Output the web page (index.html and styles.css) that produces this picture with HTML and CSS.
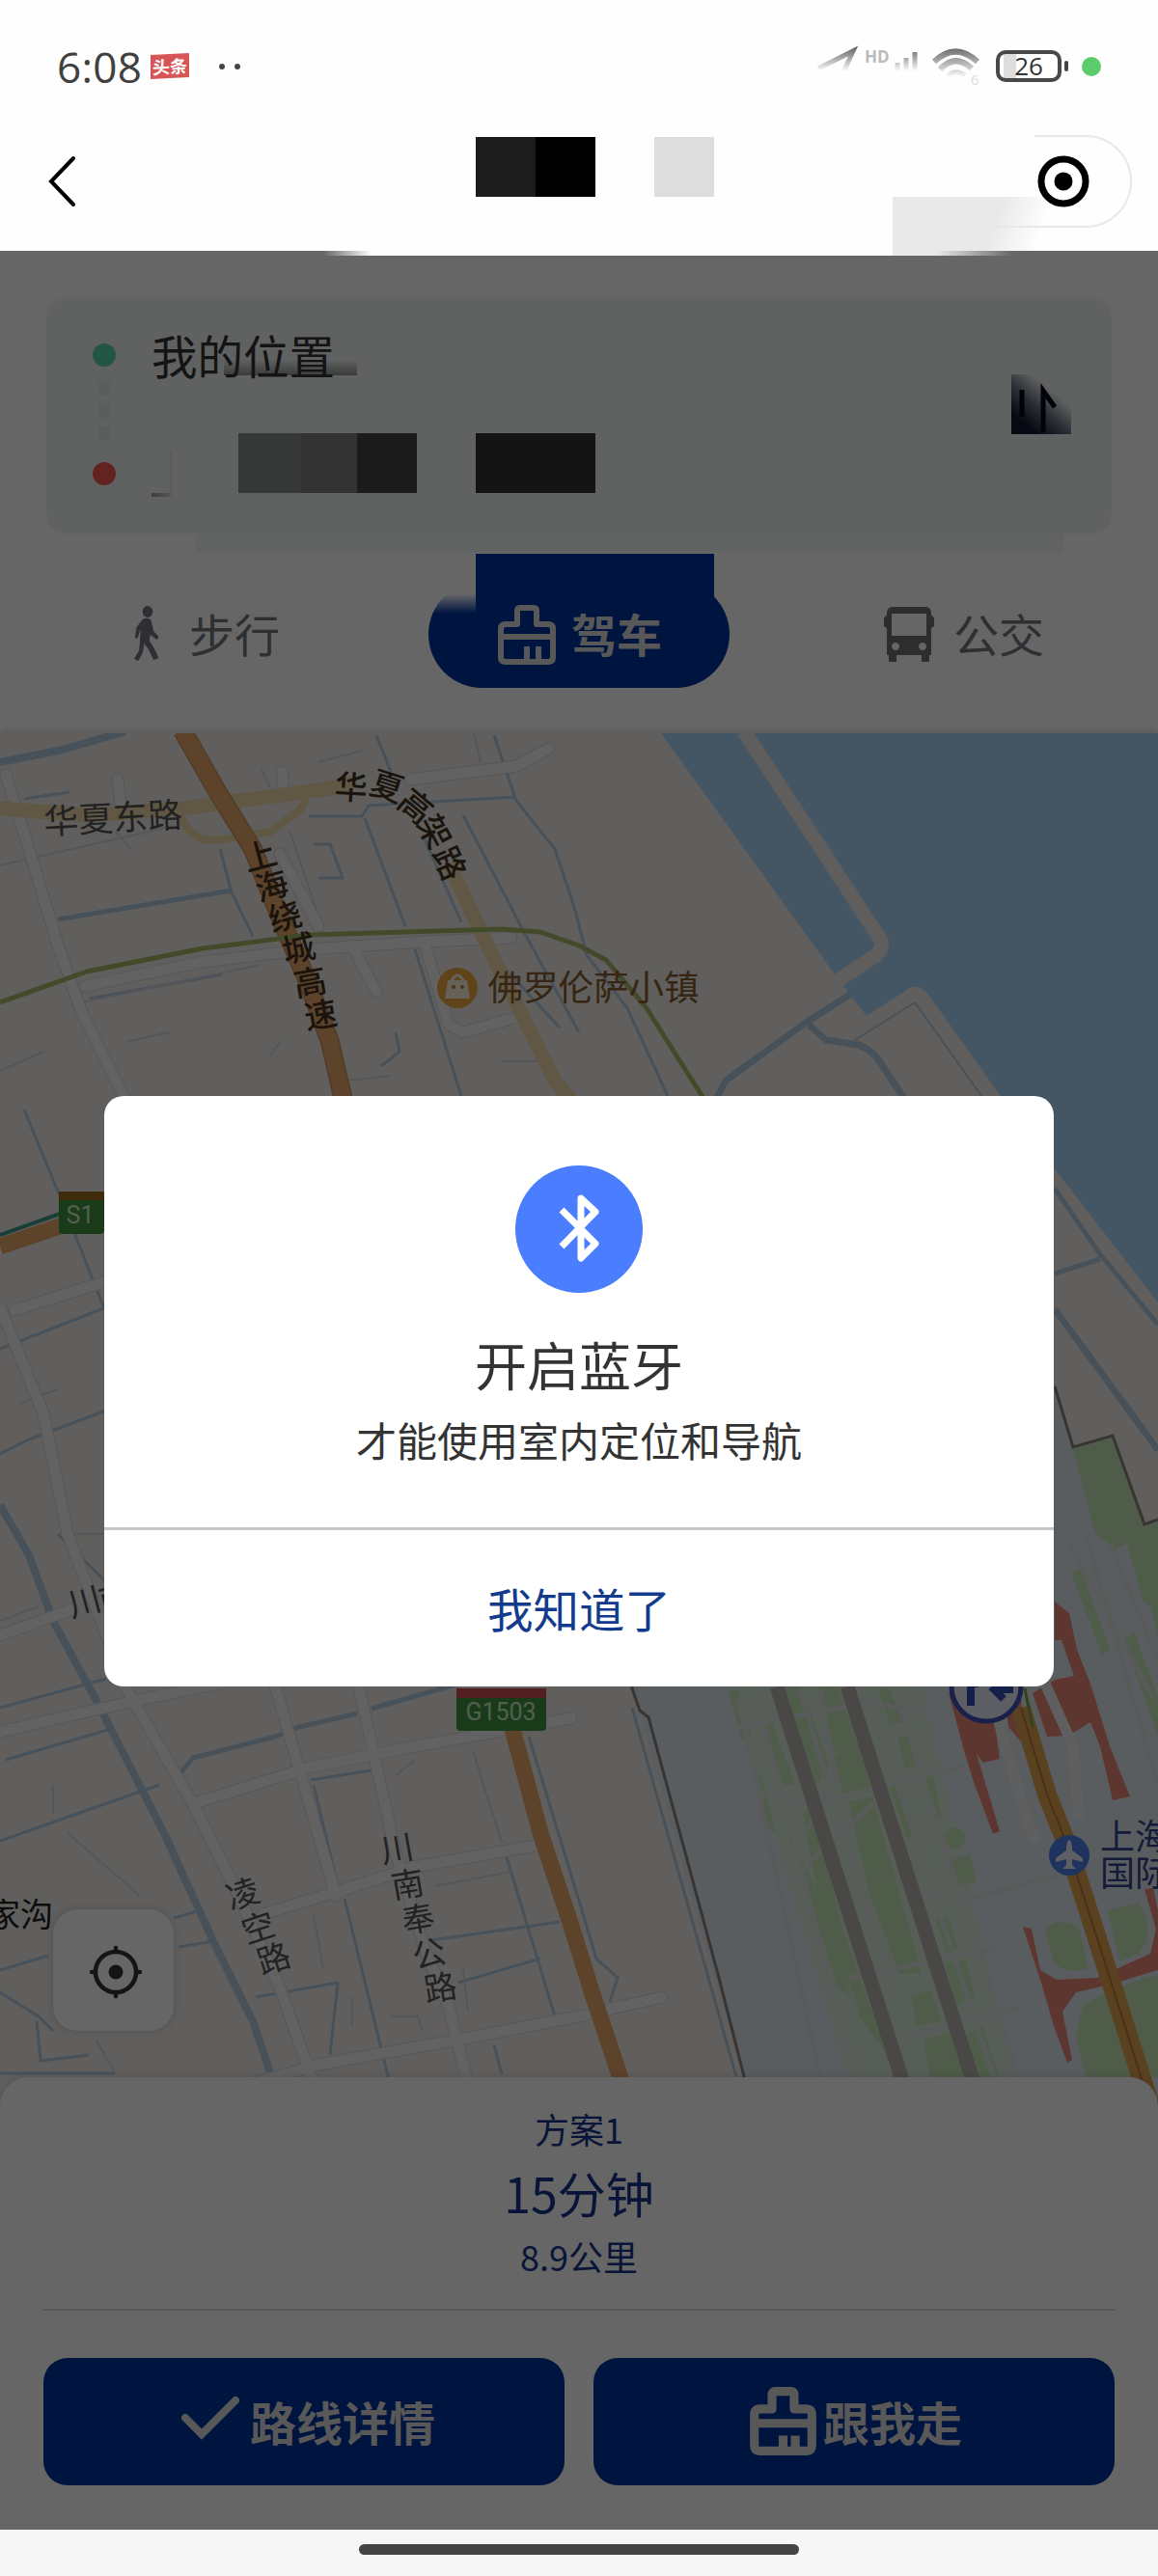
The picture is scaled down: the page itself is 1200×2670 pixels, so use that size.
FILE: index.html
```html
<!DOCTYPE html>
<html lang="zh-CN">
<head>
  <meta charset="UTF-8" />
  <meta name="viewport" content="width=device-width, initial-scale=1.0"/>
  <title>路线导航</title>
  <link rel="stylesheet" href="styles.css">
</head>
<body>
  <header class="header">
    <div class="status">
      <span class="time">6:08</span>
      <span class="news">头条</span>
      <span class="dots"><i></i><i></i></span>
      <svg class="signals" width="180" height="48" viewBox="842 44 180 48" fill="none">
        <defs>
          <linearGradient id="fade" x1="0" y1="46" x2="0" y2="73" gradientUnits="userSpaceOnUse"><stop offset="0" stop-color="#555"/><stop offset="1" stop-color="#fff"/></linearGradient>
          <linearGradient id="fade2" x1="0" y1="48" x2="0" y2="80" gradientUnits="userSpaceOnUse"><stop offset="0" stop-color="#666"/><stop offset="1" stop-color="#fff"/></linearGradient>
        </defs>
        <path d="M848 70 L884 52 L874 74" stroke="url(#fade)" stroke-width="5"/>
        <text x="896" y="64" class="hd">HD</text>
        <path d="M930 73v-9M939 73v-14M948 73v-20" stroke="url(#fade)" stroke-width="5"/>
        <path d="M968 63Q990 42 1013 63" stroke="url(#fade2)" stroke-width="6"/>
        <path d="M974 71Q990 54 1007 70" stroke="url(#fade2)" stroke-width="6"/>
        <path d="M982 78Q990 70 1000 77" stroke="url(#fade2)" stroke-width="5"/>
        <text x="1006" y="87" class="six">6</text>
      </svg>
      <span class="battery"><b>26</b></span>
      <span class="green-dot"></span>
    </div>
    <div class="nav">
      <svg class="back" width="30" height="54" viewBox="0 0 30 54"><path d="M27 3 L4 27 L27 51" fill="none" stroke="#000" stroke-width="4" stroke-linecap="round"/></svg>
      <div class="title-mask"><i class="m1"></i><i class="m2"></i><i class="m3"></i></div>
      <svg class="capsule" width="275" height="130" viewBox="925 135 275 130">
        <defs>
          <linearGradient id="smear" x1="1035" y1="220" x2="1080" y2="238" gradientUnits="userSpaceOnUse"><stop offset="0" stop-color="#e9e9e9"/><stop offset="1" stop-color="#fefefe"/></linearGradient>
        </defs>
        <rect x="925" y="204" width="160" height="61" fill="url(#smear)"/>
        <path d="M1072 141H1125A47 47 0 0 1 1125 235H1030" fill="none" stroke="#e8e8e8" stroke-width="2"/>
        <circle cx="1102" cy="188" r="23" fill="#fff" stroke="#000" stroke-width="7"/>
        <circle cx="1102" cy="188" r="9.5"/>
      </svg>
    </div>
    <div class="edge"></div>
  </header>

  <main class="screen">
    <section class="route">
      <div class="places">
        <div class="place"><i class="dot start"></i><span>我的位置</span></div>
        <div class="trail"></div>
        <div class="place"><i class="dot end"></i><span class="corner"></span><div class="mask"><i class="k1"></i><i class="k2"></i><i class="k3"></i><i class="k4"></i></div></div>
        <svg class="swap" width="62" height="62" viewBox="0 0 62 62">
          <defs><linearGradient id="ink" x1="10" y1="48" x2="38" y2="14" gradientUnits="userSpaceOnUse"><stop offset="0" stop-color="#141630"/><stop offset=".5" stop-color="#6e7282"/><stop offset="1" stop-color="#eef1f1"/></linearGradient></defs>
          <rect width="62" height="62" fill="url(#ink)"/>
          <path d="M11 16V44M33 60V17L45 34" fill="none" stroke="#05061c" stroke-width="5"/>
        </svg>
      </div>
      <div class="tabs">
        <div class="tab walk">
          <svg width="30" height="58" viewBox="0 0 34 58" preserveAspectRatio="none" fill="#747680"><circle cx="17" cy="6" r="6"/><path d="M11 14Q17 11 21 15L24 26L30 32L28 35L20 30L19 36L24 43L30 54L24 56L18 45L13 39L11 49L6 57L1 55L7 46L9 24L5 34L2 33L4 22Z"/></svg>
          <span>步行</span>
        </div>
        <div class="tab drive">
          <svg width="60" height="62" viewBox="0 0 60 62" fill="none" stroke="#ddd" stroke-width="6" stroke-linejoin="round"><path d="M20 20V6Q20 3 23 3H37Q40 3 40 6V20H52Q57 20 57 25V54Q57 59 52 59H8Q3 59 3 54V25Q3 20 8 20ZM3 33H57M30 57V43M42 57V43"/></svg>
          <span>驾车</span>
        </div>
        <div class="tab bus">
          <svg width="52" height="57" viewBox="0 0 52 57" fill="#727278"><path fill-rule="evenodd" d="M9 0H43Q49 0 49 7V9Q52 10 52 13V20L49 22V50H47V57H39V50H13V57H5V50H3V22L0 20V13Q0 10 3 9V7Q3 0 9 0ZM8 7V30H44V7ZM12 37a4 4 0 1 0 .1 0ZM40 37a4 4 0 1 0 .1 0Z"/></svg>
          <span>公交</span>
        </div>
      </div>
    </section>

    <section class="map">
      <svg class="map-canvas" width="1200" height="1430" viewBox="0 760 1200 1430">
        <rect y="760" width="1200" height="1430" fill="#f1ede8"/>
        <!-- sea -->
        <path fill="#aad4fa" d="M685 760H1200V1350L1094 1213L1037 1136L960 1028Q948 1018 940 1026L898 1053L883 1034L868 1014Z"/>
        <path d="M771 758L910 970Q918 980 908 990L866 1018" class="land-line"/>
        <!-- airport -->
        <path fill="#e1e8ee" d="M655 1748L640 1650L1085 1410L1112 1500L1153 1488L1186 1580L1200 1575V2190H780Z"/>
        <path fill="#d5ebd0" opacity=".6" d="M755 1748H955L1060 2190H890Z"/>
        <g fill="#c3e6b6">
          <path d="M1112 1502L1153 1490L1186 1582L1200 1577V1670L1185 1660L1168 1600L1155 1605L1135 1590Z"/>
          <path d="M812 1748H830L860 1830L846 1850ZM846 1748H868L888 1808L862 1818ZM790 1790L800 1785L824 1850L812 1850Z"/>
          <path d="M864 1820L890 1806L903 1855L875 1865ZM880 1868L904 1862L955 2045L932 2045L900 1960Z"/>
          <path d="M832 1878L846 1872L870 1990L905 2090L890 2080L852 1990ZM815 1900L836 1935L862 2000L885 2080L855 1995Z"/>
          <path d="M835 1955L850 1960L880 2070L868 2060ZM880 2040L905 2085L920 2130L890 2090Z"/>
          <path d="M944 2070L965 2062L975 2095L950 2100ZM957 2115L988 2105L1003 2153H964ZM980 2035L1000 2030L1010 2070L990 2080Z"/>
          <path d="M1000 2110L1018 2100L1036 2153H1014ZM985 1928L1005 1922L1012 1950L992 1955Z"/>
          <circle cx="990" cy="1905" r="11"/>
          <path d="M920 1850L930 1845L948 1900L940 1905ZM955 1840L966 1838L976 1885L966 1880ZM930 1890L944 1930L962 1985L950 1980Z"/>
          <path d="M1083 2000Q1095 1985 1118 1998L1128 2040Q1110 2048 1092 2035ZM1148 1980L1180 1972Q1200 2000 1180 2025L1160 2033ZM1122 2078Q1200 2040 1200 2050V2153H1125L1115 2110Z"/>
          <path d="M1165 1700L1175 1690L1200 1760V1800ZM1110 1630L1120 1625L1150 1710L1142 1715ZM1190 1650L1200 1645V1700Z"/>
          <path d="M755 1755L764 1750L778 1800L770 1805ZM910 1750L922 1750L935 1785L922 1788ZM785 1830L795 1860L803 1900L796 1895ZM970 1990L982 1985L992 2020L980 2024ZM930 1800L945 1798L950 1830L938 1832Z"/>
        </g>
        <g class="taxiway">
          <path d="M765 1790L900 1765L960 1775M790 1860L840 1870L1000 1830M820 1950L870 1900L905 1870M945 1960L1000 1970L1110 1940M880 2050L1030 2020M940 2110L1060 2080"/>
          <path d="M765 1760L850 2153M785 1760L885 2153M828 1750L920 2050M900 1760L1030 2153M930 1760L1055 2153M850 1750L865 1840L835 1900"/>
          <path d="M1108 1600L1195 1760M1125 1590L1200 1850M1150 1600L1200 1720"/>
        </g>
        <path d="M805 1748L935 2156M878 1748L1008 2156" class="runway"/>
        <path d="M1093 1437L1112 1500L1153 1488L1186 1580L1200 1575M652 1700L655 1750L663 1773L672 1780L710 1920L745 2050L772 2156" class="bound"/>
        <!-- rivers and canals -->
        <g class="canal">
          <path stroke-width="8" d="M0 790L65 777L130 758M0 1560L30 1612L55 1680L100 1763L170 1900L220 2010L262 2095L284 2160"/>
          <path stroke-width="7" d="M882 1030L835 1060L752 1120L742 1140M838 1062L856 1078L890 1083Q905 1090 910 1098L938 1140M1093 1357L1200 1503"/>
          <path stroke-width="5" d="M60 953L240 923M1093 1232L1140 1300L1200 1373M1093 1320L1140 1305M185 1840L200 1822L285 1800L310 1790L370 1776M385 1771L500 1738"/>
          <path stroke-width="3" d="M390 762L405 800M512 762L535 830L575 880L595 940L608 990L650 1045L692 1136M480 845L545 970L600 1070M378 848L420 960M25 828L72 821M93 1035L230 1010M430 984L478 1136M496 975L580 1065M320 846H375L382 835L535 826M440 870L478 956M228 880L240 925L262 970M325 875H342L355 910H330M410 1070L414 1090L395 1105"/>
          <path stroke-width="3" d="M0 1908L165 1850M6 1824L115 1792M0 1398L110 1355M30 1492L115 1460M0 1507L30 1492M60 1590L110 1640M25 1150L62 1240L108 1356M322 1845L385 1835M325 1850L350 1955M357 1968L403 2156M475 2055L560 2030M440 2012L580 1992M0 2042L50 2027M180 1988L208 1980M185 2018L222 2012M548 1800L600 1970L618 2030L640 2050L632 2075M525 1925L575 2090M0 2065L40 2090L55 2105M38 2095L42 2136L92 2130M0 2149H120M512 2120L520 2150M265 2070L350 2055L342 2130M655 1770L764 2156M0 1770L110 1740"/>
          <path stroke-width="2" d="M886 1078L948 1039L1020 1140"/>
        </g>
        <g class="plots">
          <path d="M0 897L180 856M80 1040L270 1000M120 862L135 880M300 860L330 950M330 790L375 778M290 1080L280 1095M0 1110L45 1090M130 1080L175 1070M270 795L285 827M360 1120L405 1115M490 755L498 790M0 1680L40 1665M75 1590H110M20 1455L60 1440M70 1900L145 1965M410 1840L430 1825M490 1815L520 1910M450 1955L530 1940M405 2090H433L438 2105M365 2070V2100M480 2040L485 2085M325 1985L335 2040M100 2115L120 2150M55 1850V1880M520 1100H560"/>
        </g>
        <!-- streets -->
        <g class="street-edge"><use href="#streets"/></g>
        <g class="street">
          <g id="streets">
            <path d="M6 803L30 880L60 980L85 1050L130 1140M88 1022L210 997L320 984L440 976L530 972M425 808L535 794L568 776M122 808L125 835M293 800V825M290 885L330 960M365 980L390 1028M440 978L465 1062L480 1070L537 1054"/>
            <path d="M0 1355L45 1465L70 1590L120 1720M15 1358L120 1325M0 1695L75 1668M0 1795L130 1765L240 1742M125 1740L200 1870L245 1960L290 2060L325 2160M205 1868L320 1832L420 1812L592 1781M283 1740L312 1840L348 1965M370 1740L390 1830L410 1920L440 2020L465 2080L485 2160M272 1984L345 1962L430 1935L560 1912M260 2160L330 2140L470 2115L600 2090L686 2070"/>
          </g>
        </g>
        <path d="M0 838L90 845L190 838L350 816L365 812" class="avenue wide"/>
        <path d="M187 845Q200 880 240 868L280 862L310 840L318 828" class="avenue ramp"/>
        <path d="M465 895L510 990L545 1060L575 1120L600 1150" class="avenue wide"/>
        <path d="M189 757L225 820L262 880L290 950L318 1015L342 1080L357 1145" class="express-edge"/>
        <path d="M189 757L225 820L262 880L290 950L318 1015L342 1080L357 1145M0 1292L65 1270M525 1770L540 1825L560 1900L590 1990L615 2070L645 2160" class="express"/>
        <path d="M0 1280L65 1257" stroke="#3c9c85" stroke-width="4"/>
        <path d="M0 1039L90 1007L210 983L320 969L520 963L560 966L600 980L628 995L670 1045L730 1140" class="metro"/>
        <!-- terminals -->
        <g fill="#e88879">
          <path d="M1093 1660L1108 1672L1116 1710L1130 1745L1150 1810L1171 1862L1153 1866L1140 1810L1130 1785L1107 1799L1085 1800L1070 1755L1093 1741L1113 1737L1100 1700L1093 1700Z"/>
          <path d="M983 1755L1030 1780L1036 1823L1019 1827L1012 1818L1036 1898L1029 1901L1010 1850L1000 1818ZM1040 1750L1057 1750L1062 1810L1045 1790Z"/>
          <path d="M1060 1997L1069 1999L1078 2042L1095 2052L1137 2050L1165 2037L1192 2025L1198 2000L1186 1958L1195 1957L1200 1980V2042L1150 2057L1115 2065L1101 2085L1111 2135L1106 2138L1092 2100L1079 2055Z"/>
        </g>
        <path d="M1083 1745L1112 1810L1118 1880M1035 1785L1065 1890L1072 1905" class="street apron"/>
        <path d="M1058 1770L1085 1860L1107 1915L1118 1950L1150 2050L1180 2145L1200 2210" class="express double"/>
        <path d="M1058 1770L1085 1860L1107 1915L1118 1950L1150 2050L1180 2145L1200 2210" stroke="#b97b35" fill="none" stroke-width="2"/>
        <path d="M1062 1750L1070 1790" stroke="#7ca84a" stroke-width="3"/>
        <!-- signs and markers -->
        <g><rect x="61" y="1235" width="47" height="44" rx="4" fill="#3f9440"/><rect x="61" y="1235" width="47" height="9" fill="#9c6c20"/><text x="83" y="1259" class="sign">S1</text></g>
        <g><rect x="473" y="1750" width="93" height="44" rx="4" fill="#3f9440"/><rect x="473" y="1750" width="93" height="10" fill="#cc5050"/><text x="519" y="1774" class="sign">G1503</text></g>
        <circle cx="1022" cy="1748" r="36" fill="#e8ecfa" stroke="#3f54b8" stroke-width="5"/>
        <path d="M1006 1768V1745H1014M1050 1751H1032M1040 1741L1030 1751L1040 1761" stroke="#3550b8" stroke-width="8" fill="none"/>
        <circle cx="474" cy="1024" r="21" fill="#f0a83c"/>
        <path d="M467 1018Q474 1004 481 1018" fill="none" stroke="#fff4df" stroke-width="3"/><path d="M464 1016H484L487 1035H461Z" fill="#fff4df"/><circle cx="470" cy="1023" r="2" fill="#c08030"/><circle cx="479" cy="1023" r="2" fill="#c08030"/>
        <circle cx="1108" cy="1923" r="21" fill="#4b80e8"/><path d="M1108 1907Q1111 1908 1111 1918L1122 1926V1930L1111 1927V1933L1115 1937H1101L1105 1933V1927L1094 1930V1926L1105 1918Q1105 1908 1108 1907Z" fill="#e8eefc"/>
        <g class="label">
          <text transform="translate(117 845) rotate(-3)" class="big">华夏东路</text>
          <g class="brown">
            <text transform="translate(364 814) rotate(3)">华</text><text transform="translate(402 813) rotate(18)">夏</text><text transform="translate(432 834) rotate(40)">高</text><text transform="translate(452 861) rotate(62)">架</text><text transform="translate(468 894) rotate(66)">路</text>
            <text transform="translate(269 885) rotate(-15)">上</text><text transform="translate(281 916) rotate(-15)">海</text><text transform="translate(295 948) rotate(-15)">绕</text><text transform="translate(309 981) rotate(-12)">城</text><text transform="translate(321 1016) rotate(-10)">高</text><text transform="translate(332 1050) rotate(-10)">速</text>
          </g>
          <text x="615" y="1021" class="big poi">佛罗伦萨小镇</text>
          <text transform="translate(87 1658) rotate(-15)">川</text><text transform="translate(119 1654) rotate(-15)">南</text>
          <text transform="translate(251 1961) rotate(-18)">凌</text><text transform="translate(267 1996) rotate(-18)">空</text><text transform="translate(283 2028) rotate(-18)">路</text>
          <text transform="translate(411 1914) rotate(-10)">川</text><text transform="translate(422 1951) rotate(-10)">南</text><text transform="translate(433 1987) rotate(-10)">奉</text><text transform="translate(444 2023) rotate(-14)">公</text><text transform="translate(456 2058) rotate(-10)">路</text>
          <text x="21" y="1982" class="dark">家沟</text>
          <text x="1176" y="1901" class="big air">上海</text><text x="1176" y="1939" class="big air">国际</text>
        </g>
      </svg>
      <button class="locate">
        <svg width="56" height="56" viewBox="0 0 56 56" fill="none" stroke="#333" stroke-width="4.5" stroke-linecap="round"><circle cx="28" cy="28" r="21"/><path d="M28 3V7M28 49V53M3 28H7M49 28H53"/><circle cx="28" cy="28" r="7.5" fill="#333" stroke="none"/></svg>
      </button>
    </section>

    <section class="sheet">
      <div class="plan">
        <div class="plan-name">方案1</div>
        <div class="plan-time">15分钟</div>
        <div class="plan-dist">8.9公里</div>
      </div>
      <div class="actions">
        <button class="action details"><svg class="check" width="60" height="46" viewBox="0 0 60 46"><path d="M4 23L21 40L56 5" fill="none" stroke="#ddd" stroke-width="8" stroke-linecap="round"/></svg>路线详情</button>
        <button class="action go"><svg width="69" height="71" viewBox="0 0 60 62" fill="none" stroke="#ddd" stroke-width="8" stroke-linejoin="round"><path d="M20 20V7Q20 4 23 4H37Q40 4 40 7V20H51Q56 20 56 25V53Q56 58 51 58H9Q4 58 4 53V25Q4 20 9 20ZM4 33H56M30 57V44M41 57V44"/></svg>跟我走</button>
      </div>
    </section>

    <div class="overlay">
      <div class="dialog">
        <div class="dialog-body">
          <svg width="132" height="132" viewBox="0 0 132 132"><circle cx="66" cy="66" r="66" fill="#4a7eff"/><path d="M48 46L83 81L68 96V34L83 48L48 84" fill="none" stroke="#fff" stroke-width="7" stroke-linejoin="round"/></svg>
          <h1>开启蓝牙</h1>
          <p>才能使用室内定位和导航</p>
        </div>
        <button class="dialog-ok">我知道了</button>
      </div>
    </div>
  </main>

  <footer class="home"><i></i></footer>
</body>
</html>
```
FILE: styles.css
```css
* { box-sizing: border-box; }
body { margin: 0; width: 1200px; font-family: "Noto Sans CJK SC", sans-serif; background: #fff; color: #333; }
button { border: none; padding: 0; font-family: inherit; }
svg { display: block; flex: none; }
i { display: block; }

/* top bars */
.header { height: 265px; display: flex; flex-direction: column; background: #fefefe; }
.status { height: 135px; padding: 2px 59px 0 59px; display: flex; align-items: center; }
.time { width: 97px; font: 44px/1 "Open Sans", sans-serif; letter-spacing: .3px; color: #404040; white-space: nowrap; }
.news { width: 40px; height: 25px; background: #d75556; color: #fff; font-size: 18px; font-weight: 700; line-height: 24px; text-align: center; transform: skewY(-3deg); white-space: nowrap; }
.dots { display: flex; gap: 10px; margin-left: 31px; }
.dots i { width: 6px; height: 6px; border-radius: 50%; background: #444; }
.signals { margin-left: auto; margin-right: 10px; }
.hd { font: 700 17px "Open Sans", sans-serif; fill: #bbb; }
.six { font: 15px "Open Sans", sans-serif; fill: #ddd; }
.battery { position: relative; width: 68px; height: 33px; border: 4px solid #484848; border-radius: 10px; display: flex; justify-content: center; background: linear-gradient(90deg, #fff 4px, #ddd 4px, #ddd 17px, #fff 17px); }
.battery b { font: 26px/25px "Open Sans", sans-serif; color: #333; }
.battery::after { content: ""; position: absolute; right: -11px; top: 7px; width: 4px; height: 11px; border-radius: 2px; background: #444; }
.green-dot { width: 20px; height: 20px; margin-left: 21px; border-radius: 50%; background: #5ccb6c; }
.nav { height: 125px; display: flex; align-items: flex-start; }
.back { margin: 26px 0 0 49px; }
.title-mask { display: flex; margin: 7px 0 0 414px; }
.title-mask i { width: 62px; height: 62px; }
.m1 { background: #1c1c1c; }
.m2 { background: #000; }
.m3 { background: #ddd; margin-left: 61px; }
.capsule { margin-left: auto; }
.edge { height: 5px; position: relative; background: linear-gradient(90deg, #666 335px, #fefefe 385px, #fefefe 925px, #e9e9e9 925px, #e9e9e9 970px, #666 1050px); }

.screen { position: relative; height: 2357px; background: #fff; overflow: hidden; }

/* start / end */
.route { height: 495px; padding: 44px 48px 0; }
.places { position: relative; height: 244px; padding: 31px 48px; border-radius: 22px; background: #f1f5f3; box-shadow: 0 0 6px #f1f5f3; }
.places::after { content: ""; position: absolute; left: 155px; right: 50px; bottom: -19px; height: 20px; background: #f3f6f5; }
.place { height: 56px; display: flex; align-items: center; font-size: 47.5px; line-height: 56px; color: #333; }
.place span { margin-top: -1px; background: linear-gradient(180deg, transparent 58%, rgba(0,0,0,.4) 88%, transparent 88%) 75px 0 no-repeat; padding-right: 23px; }
.dot { width: 24px; height: 24px; margin-right: 37px; border-radius: 50%; }
.start { background: #56d4a8; }
.end { background: #f45854; }
.trail { width: 12px; height: 67px; margin-left: 6px; background: repeating-linear-gradient(180deg, #e6eae8 0 14px, #f1f5f3 14px 23px); }
.place .corner { width: 21px; height: 48px; padding: 0; background: linear-gradient(90deg, #999, #ddd) 0 100% / 21px 4px no-repeat; border-right: 2px solid #e0e4e2; }
.mask { display: flex; height: 62px; margin: -22px 0 0 69px; }
.mask i { height: 62px; }
.k1 { width: 65px; background: #858c89; }
.k2 { width: 58px; background: #808080; }
.k3 { width: 62px; background: #444; }
.k4 { width: 124px; margin-left: 61px; background: #343434; }
.swap { position: absolute; right: 42px; top: 79px; }

.tabs { display: flex; height: 138px; margin-top: 21px; }
.tab { display: flex; align-items: center; font-size: 47px; line-height: 56px; color: #73757b; }
.tab span { margin-top: -3px; }
.walk { padding: 28px 0 0 90px; gap: 28px; }
.drive { position: relative; width: 312px; height: 111px; margin: 28px 0 0 154px; padding-left: 72px; gap: 16px; border-radius: 56px; background: #0034a0; color: #ddd; font-weight: 700; }
.drive::before { content: ""; position: absolute; left: 49px; top: -28px; width: 247px; height: 90px; background: #0034a0; }
.drive::after { content: ""; position: absolute; left: 0; top: 0; width: 49px; height: 34px; background: linear-gradient(180deg, #fff 40%, rgba(255,255,255,0)); }
.drive > * { position: relative; }
.bus { padding-top: 28px; margin-left: 160px; gap: 20px; }

/* map */
.map { position: relative; height: 1393px; box-shadow: 0 -2px 8px #d8dde0; }
.map-canvas { display: block; }
.land-line { fill: none; stroke: #eeeae6; stroke-width: 15; stroke-linejoin: round; }
.taxiway path { fill: none; stroke: #dde3df; stroke-width: 5; }
.runway { stroke: #b9b5b2; stroke-width: 15; }
.bound { fill: none; stroke: #8d827d; stroke-width: 3; }
.canal path { fill: none; stroke: #b2cbe2; stroke-linejoin: round; }
.plots path { fill: none; stroke: #d4d7de; stroke-width: 2; }
.street, .street-edge { fill: none; stroke-linecap: round; stroke-linejoin: round; }
.street { stroke: #f5f5f6; stroke-width: 11; }
.apron { stroke: #eeeeee; }
.street-edge { stroke: #d8d6d6; stroke-width: 13; }
.avenue { fill: none; stroke: #f1dcaa; stroke-linejoin: round; }
.ramp { stroke-width: 8; }
.wide { stroke-width: 15; }
.express-edge { fill: none; stroke: #c69463; stroke-width: 20; }
.express { fill: none; stroke: #e6a868; stroke-width: 17; stroke-linejoin: round; }
.double { stroke: #e2a250; stroke-width: 20; }
.metro { fill: none; stroke: #a5b968; stroke-width: 5; stroke-linejoin: round; }
.sign { fill: #d2ecc8; font: 25px Roboto, sans-serif; text-anchor: middle; dominant-baseline: central; }
.label text { font-size: 34px; fill: #555; text-anchor: middle; dominant-baseline: central; }
.label .big { font-size: 36px; }
.label .brown text { fill: #443322; font-weight: 500; }
.label .poi { fill: #8a5c30; font-size: 36.5px; }
.label .dark { fill: #222; }
.label .air { fill: #34448c; }
.locate { position: absolute; left: 55px; top: 1219px; width: 125px; height: 126px; display: flex; align-items: center; justify-content: center; padding-left: 4px; padding-top: 3px; border-radius: 26px; background: #fff; box-shadow: 0 0 10px rgba(0,0,0,.15); }

/* bottom sheet */
.sheet { position: relative; height: 469px; padding: 26px 45px 0; border-radius: 30px 30px 0 0; background: #fff; box-shadow: 0 -2px 10px rgba(0,0,0,.1); text-align: center; }
.plan { height: 216px; border-bottom: 2px solid #dedede; color: #16368c; font-size: 36px; }
.plan-name { line-height: 54px; }
.plan-time { font-size: 50px; line-height: 79px; }
.plan-dist { line-height: 52px; }
.actions { display: grid; grid-template-columns: 1fr 1fr; gap: 30px; margin-top: 49px; }
.action { height: 132px; display: flex; align-items: center; justify-content: center; gap: 11px; padding-bottom: 2px; border-radius: 25px; background: #0034a0; color: #ddd; font-size: 48px; font-weight: 700; }
.details { padding-left: 9px; }
.check { margin-top: -6px; }
.go { gap: 7px; padding-left: 4px; }

/* bluetooth dialog */
.overlay { position: absolute; inset: 0; padding: 871px 108px 0; background: rgba(0,0,0,.6); }
.dialog { height: 612px; border-radius: 20px; background: #fff; overflow: hidden; text-align: center; }
.dialog-body { height: 450px; padding-top: 72px; border-bottom: 3px solid #c6c6c6; }
.dialog-body svg { margin: 0 auto; }
.dialog h1 { margin: 34px 0 0; font-size: 54px; line-height: 80px; font-weight: 400; }
.dialog p { margin: 8px 0 0; font-size: 42px; line-height: 60px; }
.dialog-ok { display: block; width: 100%; height: 162px; padding-bottom: 1px; background: none; color: #123b8d; font-size: 47.5px; }

.home { height: 48px; padding-top: 15px; background: #f6f6f6; }
.home i { width: 456px; height: 11px; margin: 0 auto; border-radius: 6px; background: #444; }
```
